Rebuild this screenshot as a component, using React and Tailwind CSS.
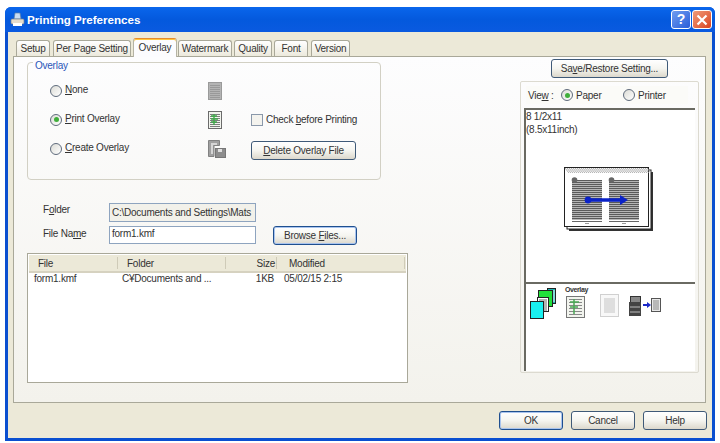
const font = { fontFamily: '"Liberation Sans", Arial, sans-serif' };

function U({ children }) {
  return <span className="underline underline-offset-1">{children}</span>;
}

function Radio({ on }) {
  return (
    <span className="flex h-[12px] w-[12px] shrink-0 items-center justify-center rounded-full border border-[#5f6b7c] bg-gradient-to-br from-[#dcdcd6] to-[#ffffff]">
      {on && <span className="h-[5px] w-[5px] rounded-full bg-[#3fae3a]" />}
    </span>
  );
}

function Button({ children, className = "", strong }) {
  return (
    <div
      className={`flex items-center justify-center whitespace-nowrap rounded-[3px] border bg-gradient-to-b from-[#ffffff] via-[#f5f5f0] to-[#dcd8cc] ${
        strong ? "border-[#1f4f8f] shadow-[inset_0_0_0_1px_#a9c4ee]" : "border-[#3f5a78]"
      } ${className}`}
    >
      {children}
    </div>
  );
}

function Tab({ w, active, children }) {
  return (
    <div
      className={`flex items-center justify-center whitespace-nowrap rounded-t-[3px] border border-b-0 ${
        active
          ? "relative z-10 -mb-px h-[19px] border-[#b5b3a4] border-t-[#e68b2c] bg-[#fcfcfe] pb-[1px] shadow-[inset_0_1px_0_#ffc73c]"
          : "h-[16px] border-[#a9a899] bg-gradient-to-b from-[#ffffff] to-[#ece9dc]"
      }`}
      style={{ width: w }}
    >
      {children}
    </div>
  );
}

function PageIcon({ kind }) {
  if (kind === "create") {
    return (
      <svg width="18" height="18" viewBox="0 0 18 18">
        <path d="M0.5 0.5h11v5H6v11H0.5z" fill="#a0a0a0" stroke="#828282" />
        <path d="M3 3h6v2H3zM3 3h2v11H3z" fill="#d6d6d6" />
        <rect x="7.5" y="8.5" width="10" height="9" fill="#8d8d8d" stroke="#777" />
        <rect x="10" y="9" width="4" height="3" fill="#e0e0e0" />
      </svg>
    );
  }
  const green = kind === "print";
  return (
    <svg width="14" height="18" viewBox="0 0 14 18">
      <rect x="0.5" y="0.5" width="13" height="17" fill={green ? "#f2f4ee" : "#b4b4b4"} stroke={green ? "#6b6b6b" : "#9a9a9a"} />
      {[3, 5, 7, 9, 11, 13, 15].map((y) => (
        <rect key={y} x="2" y={y} width="10" height="1" fill={green ? "#7d7d7d" : "#999"} />
      ))}
      {green && <path d="M6 3v11M3 5h6M3 8h7M3 11h6" stroke="#3fa84a" strokeWidth="1.4" fill="none" />}
    </svg>
  );
}

function Spread() {
  const lines = [];
  for (const x0 of [8, 45]) {
    for (let y = 13; y < 53; y += 1) {
      lines.push(<rect key={x0 + "-" + y} x={x0} y={y} width="30" height="1" fill={y % 2 ? "#5a5a5a" : "#b5b5b5"} />);
    }
    lines.push(<rect key={x0 + "b"} x={x0} y="54" width="30" height="1" fill="#666" />);
    lines.push(<rect key={x0 + "p"} x={x0 + 13} y="56" width="4" height="1" fill="#999" />);
    lines.push(<circle key={x0 + "c"} cx={x0 + 2.5} cy="13" r="2.8" fill="#666" />);
  }
  const hatch = [];
  for (let x = 1; x < 84; x += 2) {
    hatch.push(<path key={x} d={`M${x} 1l4 5`} stroke="#999" strokeWidth="0.8" />);
  }
  return (
    <svg width="90" height="66" viewBox="0 0 90 66" className="block">
      <rect x="5" y="5" width="84" height="59" fill="#333" />
      <rect x="3" y="3" width="84" height="59" fill="#fff" stroke="#222" />
      <rect x="0.5" y="0.5" width="84" height="59" fill="#fff" stroke="#222" />
      {hatch}
      {lines}
      <path d="M24 33h33" stroke="#0a22c8" strokeWidth="3.4" />
      <circle cx="24" cy="33" r="3.4" fill="#0a22c8" />
      <path d="M56 28l8 5-8 5z" fill="#0a22c8" />
    </svg>
  );
}

function Strip() {
  return (
    <svg width="140" height="34" viewBox="0 0 140 34" className="block">
      <rect x="17.5" y="1.5" width="8" height="15" fill="#1fb4b4" stroke="#222" />
      <path d="M22 3v12M24 3v12" stroke="#e8ffff" />
      <rect x="8.5" y="3.5" width="14" height="16" fill="#22e03a" stroke="#222" />
      <rect x="7.5" y="10.5" width="11" height="14" fill="#fff" stroke="#222" />
      <path d="M10 12v12M12 12v12M14 12v12M16 12v12" stroke="#666" />
      <rect x="0.5" y="14.5" width="13" height="17" fill="#19f0f0" stroke="#222" />
      <rect x="36.5" y="9.5" width="18" height="21" fill="#f2f4ee" stroke="#777" />
      {[12, 15, 18, 21, 24, 27].map((y) => (
        <rect key={y} x="39" y={y} width="13" height="1" fill="#888" />
      ))}
      <path d="M44 12v15M40 15h9M40 20h8" stroke="#4aa856" strokeWidth="1.5" fill="none" />
      <rect x="70.5" y="7.5" width="18" height="22" fill="#f8f8f8" stroke="#d0d0d0" />
      <rect x="74" y="11" width="11" height="15" fill="#dedede" />
      <rect x="100.5" y="9.5" width="10" height="6" fill="#888" stroke="#333" />
      <rect x="99" y="15" width="12" height="14" fill="#444" />
      <path d="M100 20h10M100 25h10" stroke="#bbb" />
      <path d="M113 18h5" stroke="#1a28c8" strokeWidth="2" />
      <path d="M117 15l4 3-4 3z" fill="#1a28c8" />
      <rect x="121.5" y="11.5" width="9" height="13" fill="#e8e8e8" stroke="#555" />
      <path d="M123 14h6M123 16h6M123 18h6M123 20h6M123 22h6" stroke="#888" />
    </svg>
  );
}

export default function App() {
  return (
    <div className="h-[443px] w-[720px] overflow-hidden whitespace-nowrap bg-white pl-[5px] pt-[7px] text-[10px] leading-[13px] tracking-[-0.24px] text-[#333]" style={font}>
      <div className="flex h-[434px] w-[710px] flex-col rounded-t-[6px] bg-[#0a4fd0]">
        <div className="flex h-[25px] shrink-0 items-center rounded-t-[6px] bg-gradient-to-b from-[#0a66ec] via-[#0459dd] to-[#0a5ae0] pl-[5px] pr-[3px] tracking-normal">
          <svg width="15" height="15" viewBox="0 0 15 15">
            <path d="M5 1h5l1 6H4z" fill="#c9dcf2" stroke="#5b7ea8" strokeWidth=".7" />
            <rect x="1" y="7" width="13" height="5" rx="1" fill="#e6dccb" stroke="#6f7f90" strokeWidth=".7" />
            <rect x="3" y="11" width="9" height="3" fill="#fff" />
          </svg>
          <span className="ml-[2px] text-[11.6px] font-bold text-white">Printing Preferences</span>
          <div className="ml-auto flex gap-[1px]">
            <div className="flex h-[19px] w-[20px] items-center justify-center rounded-[3px] border border-white bg-gradient-to-br from-[#6f9cf0] to-[#2a5cd8] text-[14px] font-bold text-white">?</div>
            <div className="flex h-[19px] w-[20px] items-center justify-center rounded-[3px] border border-white bg-gradient-to-br from-[#ef9a78] to-[#d8401c]">
              <svg width="12" height="12" viewBox="0 0 12 12"><path d="M1.5 1.5l9 9M10.5 1.5l-9 9" stroke="#fff" strokeWidth="2.2" /></svg>
            </div>
          </div>
        </div>

        <div className="mx-[3px] mb-[3px] flex min-h-0 flex-1 flex-col bg-[#ece9d8] pl-[5px] pr-[4px]">
          <div className="flex h-[24px] shrink-0 items-end pl-[3px]">
            <Tab w={34}>Setup</Tab>
            <div className="w-[3px]" />
            <Tab w={78}>Per Page Setting</Tab>
            <div className="w-[2px]" />
            <Tab w={44} active>Overlay</Tab>
            <div className="w-[1px]" />
            <Tab w={54}>Watermark</Tab>
            <div className="w-[2px]" />
            <Tab w={38}>Quality</Tab>
            <div className="w-[2px]" />
            <Tab w={34}>Font</Tab>
            <div className="w-[3px]" />
            <Tab w={39}>Version</Tab>
          </div>

          <div className="flex h-[347px] w-[693px] shrink-0 border border-[#a9a899] bg-gradient-to-b from-[#fdfdfe] to-[#f3f2ec]">
            <div className="w-[505px] shrink-0 pl-[13px] pt-[5px]">
              <div className="relative h-[118px] w-[354px] rounded-[4px] border border-[#d2d0c4] pl-[22px] pt-[13px]">
                <span className="absolute -top-[4px] left-[5px] bg-[#fcfcfe] px-[2px] text-[#2a55b8]">Overlay</span>
                <div className="grid grid-cols-[158px_43px_1fr] auto-rows-[29px] items-center">
                  <div className="flex items-center gap-[3px]"><Radio /><span className="pb-[2px]"><U>N</U>one</span></div>
                  <PageIcon kind="gray" />
                  <div />
                  <div className="flex items-center gap-[3px]"><Radio on /><span className="pb-[2px]"><U>P</U>rint Overlay</span></div>
                  <PageIcon kind="print" />
                  <div className="flex items-center gap-[3px]">
                    <span className="h-[12px] w-[12px] border border-[#8a98aa] bg-[#f4f3ee]" />
                    <span className="pb-[1px]">Check <U>b</U>efore Printing</span>
                  </div>
                  <div className="flex items-center gap-[3px]"><Radio /><span className="pb-[2px]"><U>C</U>reate Overlay</span></div>
                  <PageIcon kind="create" />
                  <Button className="mt-[4px] h-[19px] w-[105px]"><span><U>D</U>elete Overlay File</span></Button>
                </div>
              </div>

              <div className="mt-[23px] flex items-center pl-[16px]">
                <span className="-mt-[6px] w-[66px]">F<U>o</U>lder</span>
                <div className="flex h-[19px] w-[147px] items-center overflow-hidden border border-[#8ea4bf] bg-[#f2f1ea] pl-[2px]">C:\Documents and Settings\Mats</div>
              </div>
              <div className="mt-[2px] flex items-center pl-[16px]">
                <span className="-mt-[2px] w-[66px]">File Na<U>m</U>e</span>
                <div className="flex h-[18px] w-[147px] items-center border border-[#8ea4bf] bg-white pb-[2px] pl-[2px]">form1.kmf</div>
                <Button className="ml-[17px] mt-[2px] h-[19px] w-[84px]" strong><span>Browse <U>F</U>iles...</span></Button>
              </div>

              <div className="ml-0 mt-[8px] h-[130px] w-[381px] border border-[#a9a899] bg-white p-px">
                <div className="flex h-[18px] items-center border-b-2 border-[#d6d2c0] bg-[#ece9d8]">
                  <span className="w-[88px] pl-[9px]">File</span>
                  <span className="h-[12px] w-px bg-[#cfcbb8]" />
                  <span className="w-[107px] pl-[9px]">Folder</span>
                  <span className="h-[12px] w-px bg-[#cfcbb8]" />
                  <span className="w-[49px] text-right">Size</span>
                  <span className="ml-px h-[12px] w-px bg-[#cfcbb8]" />
                  <span className="w-[127px] pl-[12px]">Modified</span>
                  <span className="h-[12px] w-px bg-[#cfcbb8]" />
                </div>
                <div className="-mt-px flex items-center">
                  <span className="w-[89px] pl-[5px]">form1.kmf</span>
                  <span className="w-[107px] pl-[4px]">C¥Documents and ...</span>
                  <span className="w-[49px] text-right">1KB</span>
                  <span className="pl-[10px]">05/02/15 2:15</span>
                </div>
              </div>
            </div>

            <div className="flex-1 pt-[2px]">
              <Button className="ml-[32px] h-[19px] w-[117px]"><span>Sa<U>v</U>e/Restore Setting...</span></Button>
              <div className="ml-[1px] mt-[3px] h-[292px] w-[179px] rounded-[2px] border border-[#dcdad0] px-[3px] pt-[4px]">
                <div className="ml-[2px] flex h-[18px] w-[162px] items-center bg-[#fbfbf8] pl-[2px]">
                  <span className="w-[33px]">Vie<U>w</U> :</span>
                  <Radio on />
                  <span className="ml-[3px] w-[47px]">Paper</span>
                  <Radio />
                  <span className="ml-[3px]">Printer</span>
                </div>
                <div className="mt-[4px] h-[174px] w-[171px] border-l-2 border-t-2 border-[#6a6a62] bg-white">
                  <div>8 1/2x11</div>
                  <div>(8.5x11inch)</div>
                  <div className="ml-[38px] mt-[31px]"><Spread /></div>
                </div>
                <div className="h-[89px] w-[171px] border-l-2 border-t-2 border-[#6a6a62] bg-white pl-[4px] pt-[3px]">
                  <div className="relative">
                    <span className="absolute left-[35px] -top-[1px] text-[7px] font-bold leading-[8px] tracking-[-0.4px]">Overlay</span>
                    <Strip />
                  </div>
                </div>
              </div>
            </div>
          </div>

          <div className="flex flex-1 items-start justify-end gap-[8px] pr-[1px] pt-[8px]">
            <Button className="h-[19px] w-[64px]" strong>OK</Button>
            <Button className="h-[19px] w-[64px]">Cancel</Button>
            <Button className="h-[19px] w-[64px]">Help</Button>
          </div>
        </div>
      </div>
    </div>
  );
}
